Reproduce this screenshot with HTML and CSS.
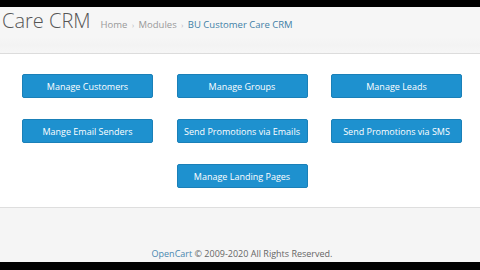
FILE: index.html
```html
<!DOCTYPE html>
<html>
<head>
<meta charset="utf-8">
<link rel="stylesheet" href="styles.css">
</head>
<body>
<div class="bar bar-top"></div>
<div class="page">
  <header class="header">
    <h1 class="title">Care CRM</h1>
    <ul class="breadcrumb">
      <li><a href="#">Home</a></li>
      <li class="sep">›</li>
      <li><a href="#">Modules</a></li>
      <li class="sep">›</li>
      <li><a href="#" class="current">BU Customer Care CRM</a></li>
    </ul>
  </header>
  <main class="content">
    <div class="grid">
      <a href="#" class="btn">Manage Customers</a>
      <a href="#" class="btn">Manage Groups</a>
      <a href="#" class="btn">Manage Leads</a>
      <a href="#" class="btn">Mange Email Senders</a>
      <a href="#" class="btn">Send Promotions via Emails</a>
      <a href="#" class="btn">Send Promotions via SMS</a>
      <a href="#" class="btn col2">Manage Landing Pages</a>
    </div>
  </main>
  <footer class="footer">
    <p><a href="#">OpenCart</a> © 2009-2020 All Rights Reserved.</p>
  </footer>
</div>
<div class="bar bar-bottom"></div>
</body>
</html>
```

FILE: styles.css
```css
html, body {
  margin: 0;
  padding: 0;
  overflow: hidden;
  background: #fff;
}
body {
  font-family: "Open Sans", "Liberation Sans", sans-serif;
  width: 480px;
  height: 270px;
}
.bar {
  background: #000;
}
.bar-top {
  height: 7px;
}
.bar-bottom {
  height: 8px;
}
.page {
  height: 255px;
  background: #fff;
  display: flex;
  flex-direction: column;
}
.header {
  height: 46px;
  background: linear-gradient(#f6f6f6 0, #f6f6f6 30px, #f3f3f3 38px, #f6f6f6 46px);
  border-bottom: 1px solid #dcdcdc;
  display: flex;
  align-items: baseline;
  padding-left: 2px;
  flex: none;
}
.title {
  margin: 0;
  font-size: 20px;
  font-weight: 300;
  color: #555;
  line-height: 26px;
  padding-top: 1px;
}
.breadcrumb {
  list-style: none;
  margin: 0 0 0 10px;
  padding: 0;
  display: flex;
  align-items: baseline;
  font-size: 9.5px;
  gap: 4.5px;
}
.breadcrumb a {
  color: #999;
  text-decoration: none;
}
.breadcrumb a.current {
  color: #3f7fa6;
}
.breadcrumb .sep {
  color: #b5b5b5;
  font-size: 7px;
}
.content {
  height: 154px;
  border-bottom: 1px solid #dedede;
  padding: 20px 0 0 22px;
  box-sizing: border-box;
  flex: none;
}
.grid {
  display: grid;
  grid-template-columns: repeat(3, 131px);
  grid-auto-rows: 24px;
  column-gap: 23.5px;
  row-gap: 21px;
}
.btn {
  display: flex;
  align-items: center;
  justify-content: center;
  background: #1e91cf;
  border: 1px solid #1a80b8;
  border-radius: 2px;
  color: #fff;
  font-size: 9px;
  font-weight: 500;
  text-decoration: none;
  box-sizing: border-box;
}
.col2 {
  grid-column: 2;
}
.footer {
  flex: 1;
  background: #f5f5f5;
  display: flex;
  align-items: flex-end;
  justify-content: center;
  padding-left: 4px;
}
.footer p {
  margin: 0 0 2px;
  font-size: 9px;
  color: #666;
  line-height: 12px;
}
.footer a {
  color: #4a88b0;
  text-decoration: none;
}
```
